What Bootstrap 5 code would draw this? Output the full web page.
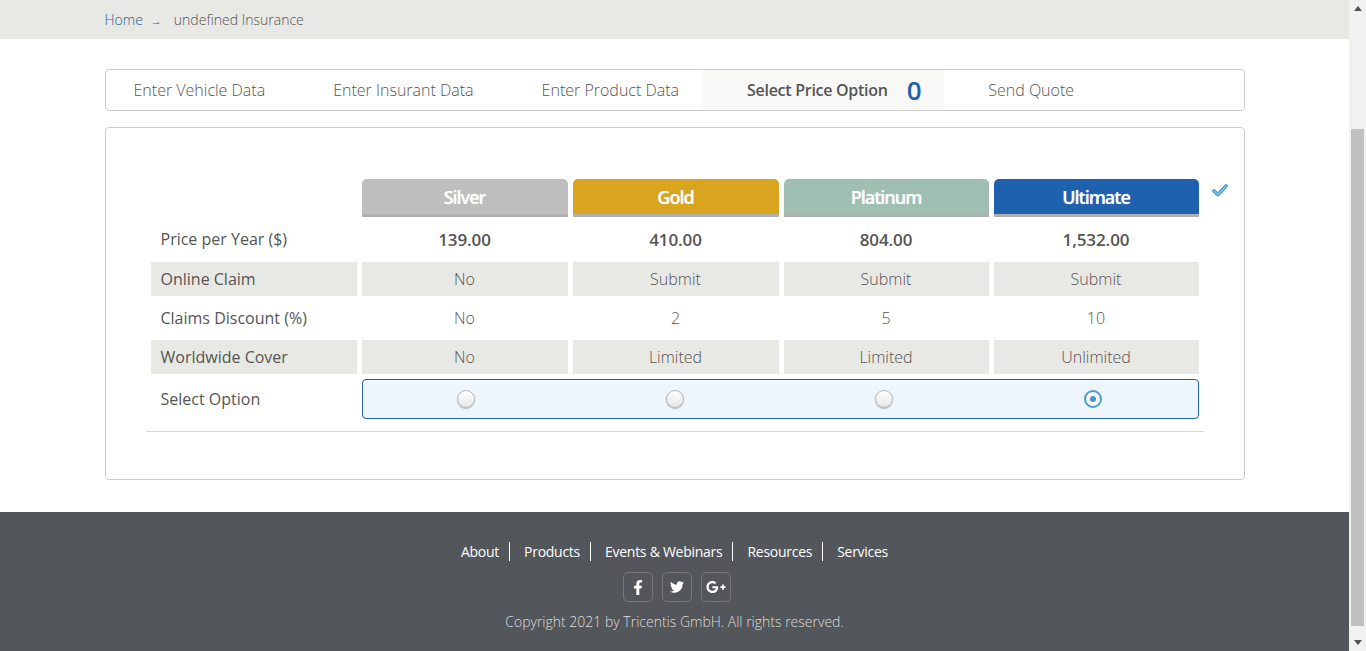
<!DOCTYPE html>
<html lang="en">
<head>
<meta charset="UTF-8">
<title>undefined Insurance</title>
<link rel="stylesheet" href="https://cdn.jsdelivr.net/npm/bootstrap@5.3.3/dist/css/bootstrap.min.css">
<style>
html, body { height: 100%; overflow: hidden; }
body { font-family: "Open Sans", "Liberation Sans", sans-serif; color: #555; background: #fff; }

.page-shell { height: 651px; }
.page-main { min-width: 0; height: 651px; overflow: hidden; }
.fake-scroll { width: 17px; background: #f1f1f1; }
.scroll-arrow { height: 17px; }
.scroll-thumb { margin: 0 2px; background: #c1c1c1; }
.scroll-gap-top { height: 112px; }
.scroll-gap-bottom { height: 8px; }

.crumb-bar { height: 39px; background: #e8e8e4; }
.crumb-wrap { width: 1140px; }
.crumb-bar .breadcrumb { font-size: 14px; font-weight: 300; --bs-breadcrumb-margin-bottom: 0; }
.crumb-bar a { color: #24609f; text-decoration: none; }
.crumb-bar .breadcrumb-item { color: #555; }
.crumb-bar .breadcrumb-item + .breadcrumb-item { padding-left: 8px; }
.crumb-bar .breadcrumb-item + .breadcrumb-item::before { content: "→"; font-size: 11px; color: #555; padding-right: 12px; float: none; }

.page-inner { width: 1140px; margin: 0 auto; }
.step-nav { height: 42px; margin-top: 30px; border: 1px solid #ccc; border-radius: 4px; font-size: 16px; font-weight: 300; }
.step-link { padding: 0 24px 0 44px; color: #555; text-decoration: none; }
.step-link:first-child { padding-left: 28px; }
.step-link.is-current { background: #f8f8f6; font-weight: 600; letter-spacing: -.28px; }
.step-count { margin-left: 19px; margin-right: -1px; font-size: 26px; font-weight: 600; color: #1f61ae; line-height: 1; }

.quote-box { height: 353px; margin-top: 16px; padding: 46px 40px 0; border: 1px solid #ccc; border-radius: 4px; }
.quote-table { width: 1058px; table-layout: fixed; border-collapse: separate; border-spacing: 5px; font-size: 16px; }
.quote-rule { margin-top: 7px; width: 1058px; border-top: 1px solid #d8d8d8; }
.quote-table th, .quote-table td { padding: 0; text-align: center; vertical-align: middle; font-weight: 300; }
.quote-table .label-col, .quote-table .plan-silver, .quote-table .plan-gold { width: 206px; }
.quote-table .plan-platinum, .quote-table .plan-ultimate { width: 205px; }
.quote-table .row-label { padding-left: 10px; text-align: left; font-weight: 400; }
.quote-table .plan-head { height: 38px; padding-top: 2px; border-bottom: 3px solid #b0b0b0; border-radius: 5px 5px 0 0; color: #fff; font-size: 18px; font-weight: 600; letter-spacing: -1px; text-shadow: 0 0 1px rgba(255, 255, 255, .6); }
.plan-silver { background: #bebebe; }
.plan-gold { background: #d9a41e; }
.plan-platinum { background: #9fbfb2; }
.plan-ultimate { background: #1f61ae; }
.row-price td, .row-price th { height: 35px; }
.quote-table .row-price td { font-size: 17px; font-weight: 600; letter-spacing: -.1px; }
.quote-table .row-price th { padding-bottom: 2px; }
.row-plain td, .row-plain th { height: 34px; }
.row-shaded td, .row-shaded th { height: 34px; background: #e8e8e4; }
.row-choice th { height: 40px; }
.quote-table .choice-cell { height: 40px; border: 1px solid #1f61ae; border-radius: 4px; background: #edf5fd; }
.choice-slot { flex: 0 0 209px; }
.choice-slot:first-child { margin-left: -1px; }
.fake-radio { display: block; width: 18px; height: 18px; border: 1px solid #b5b5b5; border-radius: 50%; background: linear-gradient(#fff, #e6e6e6); box-shadow: 0 1px 1px rgba(0, 0, 0, .25); }
.fake-radio.is-on { position: relative; border: 2px solid #4a9fca; background: #f7f7f7; box-shadow: none; }
.fake-radio.is-on::after { content: ""; position: absolute; top: 4px; left: 4px; width: 6px; height: 6px; border-radius: 50%; background: #4a94bf; }
.check-col { position: relative; }
.picked-mark { position: absolute; top: 5px; left: calc(100% + 13px); width: 16px; height: 13px; fill: none; stroke-linecap: round; stroke-linejoin: round; }

.site-foot { margin-top: 32px; height: 139px; background: #53565a; }
.foot-links { padding-top: 30px; font-size: 14px; line-height: 19px; letter-spacing: -.27px; }
.foot-links a { color: #fff; text-decoration: none; padding: 0 10px 0 14px; border-right: 1px solid #fff; }
.foot-links a:first-child { padding-left: 0; }
.foot-links a:last-child { padding-right: 0; border-right: 0; }
.social-row { margin-top: 11px; padding-left: 5px; gap: 9px; }
.social-btn { width: 30px; height: 30px; border: 1px solid #777; border-radius: 5px; }
.social-btn svg { fill: #fff; }
.foot-copy { margin-top: 10px; font-size: 14px; font-weight: 300; line-height: 19px; color: #ddd; }
</style>
</head>
<body>
<div class="page-shell d-flex">
  <div class="page-main flex-grow-1">
    <div class="crumb-bar d-flex align-items-center">
      <div class="crumb-wrap mx-auto">
        <ol class="breadcrumb">
          <li class="breadcrumb-item"><a href="#">Home</a></li>
          <li class="breadcrumb-item active">undefined Insurance</li>
        </ol>
      </div>
    </div>

    <div class="page-inner">
      <nav class="step-nav d-flex">
        <a class="step-link d-flex align-items-center" href="#">Enter Vehicle Data</a>
        <a class="step-link d-flex align-items-center" href="#">Enter Insurant Data</a>
        <a class="step-link d-flex align-items-center" href="#">Enter Product Data</a>
        <a class="step-link is-current d-flex align-items-center" href="#">Select Price Option <span class="step-count">0</span></a>
        <a class="step-link d-flex align-items-center" href="#">Send Quote</a>
      </nav>

      <div class="quote-box">
        <table class="quote-table">
          <thead>
            <tr>
              <th class="label-col"></th>
              <th class="plan-head plan-silver">Silver</th>
              <th class="plan-head plan-gold">Gold</th>
              <th class="plan-head plan-platinum">Platinum</th>
              <th class="plan-head plan-ultimate check-col">Ultimate
                <svg class="picked-mark" viewBox="0 0 16 13"><path d="M2 7 6 10.6 14 2" stroke="#3f97c9" stroke-width="3.6"/><path d="M2 7 6 10.6 14 2" stroke="#7cc4ea" stroke-width="1.6"/></svg>
              </th>
            </tr>
          </thead>
          <tbody>
            <tr class="row-price">
              <th class="row-label">Price per Year ($)</th>
              <td>139.00</td><td>410.00</td><td>804.00</td><td>1,532.00</td>
            </tr>
            <tr class="row-shaded">
              <th class="row-label">Online Claim</th>
              <td>No</td><td>Submit</td><td>Submit</td><td>Submit</td>
            </tr>
            <tr class="row-plain">
              <th class="row-label">Claims Discount (%)</th>
              <td>No</td><td>2</td><td>5</td><td>10</td>
            </tr>
            <tr class="row-shaded">
              <th class="row-label">Worldwide Cover</th>
              <td>No</td><td>Limited</td><td>Limited</td><td>Unlimited</td>
            </tr>
            <tr class="row-choice">
              <th class="row-label">Select Option</th>
              <td class="choice-cell" colspan="4">
                <div class="d-flex">
                  <div class="choice-slot d-flex justify-content-center"><span class="fake-radio"></span></div>
                  <div class="choice-slot d-flex justify-content-center"><span class="fake-radio"></span></div>
                  <div class="choice-slot d-flex justify-content-center"><span class="fake-radio"></span></div>
                  <div class="choice-slot d-flex justify-content-center"><span class="fake-radio is-on"></span></div>
                </div>
              </td>
            </tr>
          </tbody>
        </table>
        <div class="quote-rule"></div>
      </div>
    </div>

    <footer class="site-foot text-center">
      <div class="foot-links d-flex justify-content-center">
        <a href="#">About</a><a href="#">Products</a><a href="#">Events &amp; Webinars</a><a href="#">Resources</a><a href="#">Services</a>
      </div>
      <div class="social-row d-flex justify-content-center">
        <a class="social-btn d-flex align-items-center justify-content-center" href="#">
          <svg width="10" height="15" viewBox="0 0 320 512"><path d="M279.14 288l14.22-92.66h-88.91v-60.13c0-25.35 12.42-50.06 52.24-50.06h40.42V6.26S260.43 0 225.36 0c-73.22 0-121.08 44.38-121.08 124.72v70.62H22.89V288h81.39v224h100.17V288z"/></svg>
        </a>
        <a class="social-btn d-flex align-items-center justify-content-center" href="#">
          <svg width="14" height="14" viewBox="0 0 512 512"><path d="M459.37 151.716c.325 4.548.325 9.097.325 13.645 0 138.72-105.583 298.558-298.558 298.558-59.452 0-114.68-17.219-161.137-47.106 8.447.974 16.568 1.299 25.34 1.299 49.055 0 94.213-16.568 130.274-44.832-46.132-.975-84.792-31.188-98.112-72.772 6.498.974 12.995 1.624 19.818 1.624 9.421 0 18.843-1.3 27.614-3.573-48.081-9.747-84.143-51.98-84.143-102.985v-1.299c13.969 7.797 30.214 12.67 47.431 13.319-28.264-18.843-46.781-51.005-46.781-87.391 0-19.492 5.197-37.36 14.294-52.954 51.655 63.675 129.3 105.258 216.365 109.807-1.624-7.797-2.599-15.918-2.599-24.04 0-57.828 46.782-104.934 104.934-104.934 30.213 0 57.502 12.67 76.67 33.137 23.715-4.548 46.456-13.32 66.599-25.34-7.798 24.366-24.366 44.833-46.132 57.827 21.117-2.273 41.584-8.122 60.426-16.243-14.292 20.791-32.161 39.308-52.628 54.253z"/></svg>
        </a>
        <a class="social-btn d-flex align-items-center justify-content-center" href="#">
          <svg width="20" height="16" viewBox="0 0 640 512"><path d="M386.061 228.496c1.834 9.692 3.143 19.384 3.143 31.956C389.204 370.205 315.599 448 204.8 448c-106.084 0-192-85.915-192-192s85.916-192 192-192c51.864 0 95.083 18.859 128.611 50.292l-52.126 50.03c-14.145-13.621-39.028-29.599-76.485-29.599-65.484 0-118.92 54.221-118.92 121.277 0 67.056 53.436 121.277 118.92 121.277 75.961 0 104.513-54.745 108.965-82.773H204.8v-66.009h181.261zm185.406 6.437V179.2h-56.001v55.733h-55.733v56.001h55.733v55.733h56.001v-55.733H627.2v-56.001h-55.733z"/></svg>
        </a>
      </div>
      <div class="foot-copy">Copyright 2021 by Tricentis GmbH. All rights reserved.</div>
    </footer>
  </div>

  <div class="fake-scroll d-flex flex-column flex-shrink-0">
    <div class="scroll-arrow d-flex align-items-center justify-content-center">
      <svg width="8" height="5" viewBox="0 0 8 5"><path d="M4 0 8 5H0z" fill="#505050"/></svg>
    </div>
    <div class="scroll-gap-top"></div>
    <div class="scroll-thumb flex-grow-1"></div>
    <div class="scroll-gap-bottom"></div>
    <div class="scroll-arrow d-flex align-items-center justify-content-center">
      <svg width="8" height="5" viewBox="0 0 8 5"><path d="M0 0H8L4 5z" fill="#505050"/></svg>
    </div>
  </div>
</div>
</body>
</html>
